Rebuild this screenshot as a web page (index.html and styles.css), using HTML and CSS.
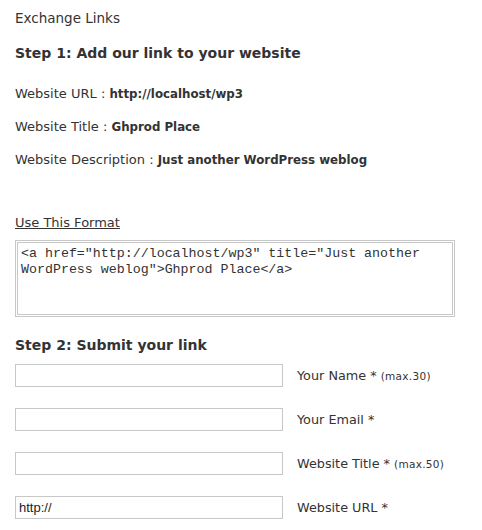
FILE: index.html
```html
<!DOCTYPE html>
<html>
<head>
<meta charset="utf-8">
<link rel="stylesheet" href="styles.css">
</head>
<body>
<div class="page">
  <div class="title">Exchange Links</div>
  <h2 class="step">Step 1: Add our link to your website</h2>
  <p class="info">Website URL : <b>http://localhost/wp3</b></p>
  <p class="info">Website Title : <b>Ghprod Place</b></p>
  <p class="info">Website Description : <b>Just another WordPress weblog</b></p>
  <p class="format"><u>Use This Format</u></p>
  <div class="code">&lt;a href="http://localhost/wp3" title="Just another WordPress weblog"&gt;Ghprod Place&lt;/a&gt;</div>
  <h2 class="step step2">Step 2: Submit your link</h2>
  <div class="row"><div class="field"></div><span class="label">Your Name * <small>(max.30)</small></span></div>
  <div class="row"><div class="field"></div><span class="label">Your Email *</span></div>
  <div class="row"><div class="field"></div><span class="label">Website Title * <small>(max.50)</small></span></div>
  <div class="row"><div class="field">http://</div><span class="label">Website URL *</span></div>
</div>
</body>
</html>
```
FILE: styles.css
```css
html, body { margin: 0; padding: 0; background: #fff; }
body { font-family: "DejaVu Sans", Verdana, sans-serif; color: #333; }
.page { padding: 10px 15px 0 15px; }
.title { font-size: 13.5px; line-height: 16px; color: #333; }
.step { font-size: 14px; font-weight: bold; line-height: 18px; margin: 0; color: #333; }
.page > .step:first-of-type { margin-top: 18px; }
.info { font-size: 13px; line-height: 16px; margin: 0; margin-top: 17px; color: #333; }
.page > .step + .info { margin-top: 24px; }
.info b { font-size: 11.8px; color: #333; }
.format { font-size: 13px; line-height: 16px; margin: 47px 0 0 0; }
.code {
  margin-top: 9px;
  height: 65px;
  border: 3px double #c8c8c8;
  font-family: "Liberation Mono", "Courier New", monospace;
  font-size: 13.3px; line-height: 16px;
  padding: 3px 3px;
  box-sizing: content-box;
  width: 428px;
  color: #333;
}
.step2 { margin-top: 19px; }
.row { display: flex; align-items: center; margin-top: 10px; }
.row + .row { margin-top: 21px; }
.field {
  height: 21px;
  border: 1px solid #c8c8c8;
  font-family: "Liberation Sans", Arial, sans-serif;
  font-size: 13px; line-height: 21px;
  padding-left: 3px; box-sizing: content-box;
  width: 263px;
  color: #222;
}
.label { margin-left: 14px; font-size: 12.8px; color: #333; }
.label small { font-size: 10.5px; letter-spacing: 0.3px; }
```
